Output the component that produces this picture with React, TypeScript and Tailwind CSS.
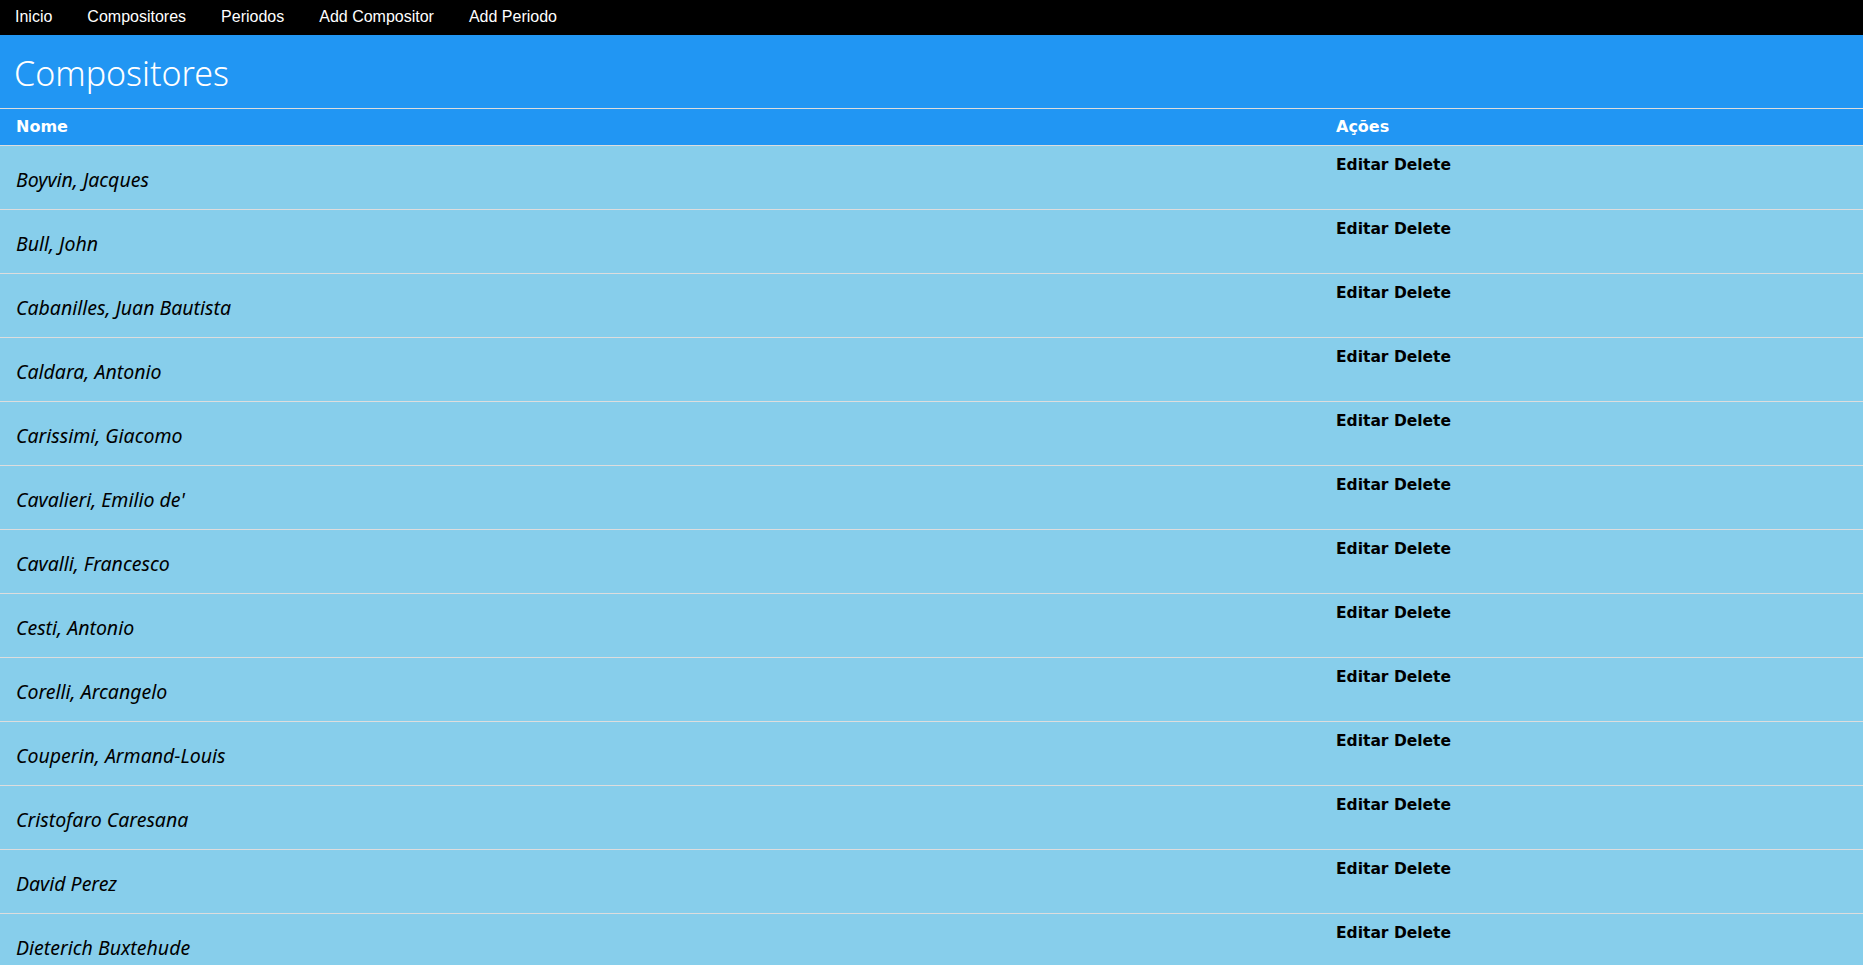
import React from "react";

const names = [
  "Boyvin, Jacques",
  "Bull, John",
  "Cabanilles, Juan Bautista",
  "Caldara, Antonio",
  "Carissimi, Giacomo",
  "Cavalieri, Emilio de'",
  "Cavalli, Francesco",
  "Cesti, Antonio",
  "Corelli, Arcangelo",
  "Couperin, Armand-Louis",
  "Cristofaro Caresana",
  "David Perez",
  "Dieterich Buxtehude",
];

export default function App() {
  return (
    <div className="h-screen overflow-hidden bg-white">
      <nav className="flex h-[35px] items-center gap-[35px] bg-black pb-[2px] pl-[15px] font-['Liberation_Sans',sans-serif] text-[16px] text-white">
        {["Inicio", "Compositores", "Periodos", "Add Compositor", "Add Periodo"].map((n) => (
          <a key={n} className="cursor-pointer">{n}</a>
        ))}
      </nav>
      <div className="flex h-[74px] items-center border-b border-[#ddd] bg-[#2196f3] px-[14px] pt-[3px]">
        <h1 className="font-['Noto_Sans',sans-serif] text-[34px] font-light leading-none text-white">Compositores</h1>
      </div>
      <div className="flex h-[37px] items-center border-b border-[#ddd] bg-[#2196f3] font-['DejaVu_Sans',sans-serif] text-[16px] font-bold text-white">
        <div className="w-[1320px] pl-[16px]">Nome</div>
        <div className="pl-[16px]">Ações</div>
      </div>
      {names.map((n) => (
        <div key={n} className="flex h-[64px] border-b border-[#ddd] bg-[#87ceeb]">
          <div className="w-[1320px] pl-[16px] pt-[19px] font-['Noto_Sans',sans-serif] text-[19.5px] italic leading-[1.5] text-black">{n}</div>
          <div className="pl-[16px] pt-[8px] font-['DejaVu_Sans',sans-serif] text-[15.5px] font-bold leading-[1.5] text-black">Editar Delete</div>
        </div>
      ))}
    </div>
  );
}
